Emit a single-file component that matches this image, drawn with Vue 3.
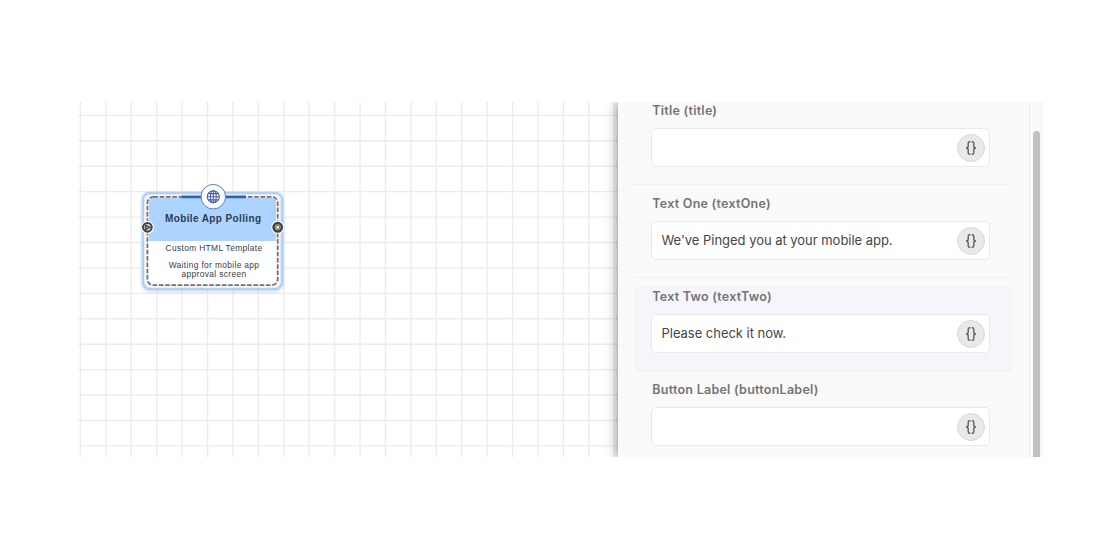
<script setup>
const fields = [
  { name: 'title', label: 'Title (title)', value: '' },
  { name: 'textOne', label: 'Text One (textOne)', value: "We've Pinged you at your mobile app." },
  { name: 'textTwo', label: 'Text Two (textTwo)', value: 'Please check it now.', active: true },
  { name: 'buttonLabel', label: 'Button Label (buttonLabel)', value: '' }
]
const step = 25.42
const columns = Array.from({ length: 22 }, (_, i) => 2.4 + i * step)
const rows = Array.from({ length: 14 }, (_, i) => 13.4 + i * step)
</script>

<template>
  <div class="page">
    <main class="frame">
      <section class="canvas">
        <svg class="grid" width="540" height="355">
          <line v-for="x in columns" :key="'c' + x" :x1="x" :x2="x" y1="0" y2="355" />
          <line v-for="y in rows" :key="'r' + y" x1="0" x2="540" :y1="y" :y2="y" />
        </svg>
        <article class="node">
          <div class="node-head">Mobile App Polling</div>
          <div class="node-body">
            <p class="kind">Custom HTML Template</p>
            <p class="desc">Waiting for mobile app<br />approval screen</p>
          </div>
          <svg class="overlay" width="142" height="108" viewBox="0 0 142 108">
            <rect x="5.4" y="14.8" width="130.3" height="88.4" rx="6" fill="none" stroke="#f4f4f4" stroke-width="1.7" />
            <rect x="5.4" y="14.8" width="130.3" height="88.4" rx="6" fill="none" stroke="#737373" stroke-width="1.8" stroke-dasharray="4.6 1.7" />
            <path d="M39.5 14.8H104" stroke="#3163b5" stroke-width="2.7" />
            <circle cx="71.3" cy="14.7" r="12.3" fill="#fff" stroke="#587eb8" stroke-width="1" />
            <g fill="none" stroke="#4a60aa" stroke-width="1.15">
              <circle cx="71.3" cy="14.7" r="6" />
              <ellipse cx="71.3" cy="14.7" rx="2.9" ry="6" />
              <path d="M71.3 8.7v12M65.3 14.7h12M66.1 11.6h10.4M66.1 17.8h10.4" />
            </g>
            <g>
              <circle cx="5.4" cy="45.3" r="6.5" fill="#fff" />
              <circle cx="5.4" cy="45.3" r="4.3" fill="#e8e8e8" stroke="#444" stroke-width="2.2" />
              <path d="M3.7 43v4.6l4.1-2.3z" fill="#aaa" stroke="#444" stroke-width="1.3" />
            </g>
            <g>
              <circle cx="135.7" cy="45.3" r="6.5" fill="#fff" />
              <circle cx="135.7" cy="45.3" r="4.2" fill="#bbb" stroke="#444" stroke-width="2.5" />
              <circle cx="135.7" cy="45.3" r="1.9" fill="#fff" stroke="#555" stroke-width="1" />
            </g>
          </svg>
        </article>
      </section>
      <aside class="panel">
        <div class="form">
          <div v-for="f in fields" :key="f.name" class="field" :class="[f.name, { active: f.active }]">
            <div class="label"><span>{{ f.label }}</span></div>
            <div class="input">
              <span class="value">{{ f.value }}</span>
              <button class="braces" type="button">
                <svg width="12" height="16" viewBox="0 0 12 16" fill="none" stroke="#606060" stroke-width="1.4">
                  <path d="M5.4 1.7H4.8Q3.2 1.7 3.2 3.3V6Q3.2 8 1 8Q3.2 8 3.2 10V12.7Q3.2 14.3 4.8 14.3H5.4" />
                  <path d="M6.6 1.7H7.2Q8.8 1.7 8.8 3.3V6Q8.8 8 11 8Q8.8 8 8.8 10V12.7Q8.8 14.3 7.2 14.3H6.6" />
                </svg>
              </button>
            </div>
          </div>
        </div>
        <div class="track"><div class="thumb"></div></div>
      </aside>
    </main>
  </div>
</template>

<style>
body { background: #fff; }
</style>

<style scoped>
.page { width: 1120px; height: 560px; padding: 102px 78px 103px; box-sizing: border-box; background: #fff; }
.frame { display: flex; width: 964px; height: 355px; overflow: hidden; }
.canvas { position: relative; width: 540px; flex: none; }
.grid { display: block; }
.grid line { stroke: #ececec; stroke-width: 1.4; }
.node {
  position: absolute; left: 64px; top: 90px; width: 141px; height: 98px;
  box-sizing: border-box; padding: 4px 5px; border: 2px solid #acd1fc; border-radius: 8px;
  background: #fff; box-shadow: 0 0 2px #a9cbf5, 0 2px 4px rgba(0, 0, 0, .12), inset 0 0 3px rgba(60, 80, 110, .3);
  font-family: "Liberation Sans", Arial, sans-serif; text-align: center; color: #354052;
}
.node-head {
  height: 44px; margin-top: -1px; padding-left: 1.5px; box-sizing: border-box;
  background: #add3ff; border-radius: 5px 5px 0 0;
  font-size: 10px; font-weight: 700; line-height: 44px; letter-spacing: .38px; color: #2c3d50; white-space: nowrap;
}
.node-body { padding-left: 3px; font-size: 8.4px; letter-spacing: .35px; }
.node p { margin: 0; white-space: nowrap; }
.kind { padding-top: 3px; line-height: 9px; }
.node .desc { margin-top: 8px; line-height: 8.6px; }
.overlay { position: absolute; left: -2px; top: -12px; }
.panel {
  position: relative; display: flex; width: 424px; flex: none; box-sizing: border-box;
  background: #fafafa; box-shadow: 0 0 5px rgba(0, 0, 0, .3), -2px 0 12px rgba(0, 0, 0, .27);
  font-family: Inter, "Liberation Sans", sans-serif;
}
.form { width: 411px; height: 365px; margin-top: -10px; padding: 0 17px; box-sizing: border-box; }
.field { box-sizing: border-box; height: 85px; margin-top: 8px; padding: 0 22px 0 15.5px; border-bottom: 1px solid #f0f0f1; }
.field:first-child { margin-top: 0; padding-top: 8px; height: 93px; }
.field.active { background: #f5f5fb; }
.label { height: 27.5px; line-height: 22px; font-size: 12.5px; letter-spacing: .25px; font-weight: 600; color: #747474; padding-left: 1.8px; white-space: nowrap; }
.input {
  display: flex; align-items: center; justify-content: space-between; height: 39px; box-sizing: border-box;
  padding: 1px 4.5px 0 10px; border: 1px solid #e9e9eb; border-radius: 5px; background: #fff;
}
.value { font-size: 13px; letter-spacing: -.03px; line-height: 16px; margin-top: -1px; color: #43464a; white-space: nowrap; }
.braces {
  display: flex; align-items: center; justify-content: center; width: 28px; height: 28px; padding: 0;
  box-sizing: border-box; border: 1px solid #dcd8d9; border-radius: 50%; background: #e9e9e9;
}
.track { width: 13px; box-sizing: border-box; border-left: 1px solid #ebebeb; border-right: 1px solid #eee; padding: 29px 2px 0 3px; }
.thumb { width: 7px; height: 340px; border-radius: 4px; background: #c1c1c1; }
</style>
